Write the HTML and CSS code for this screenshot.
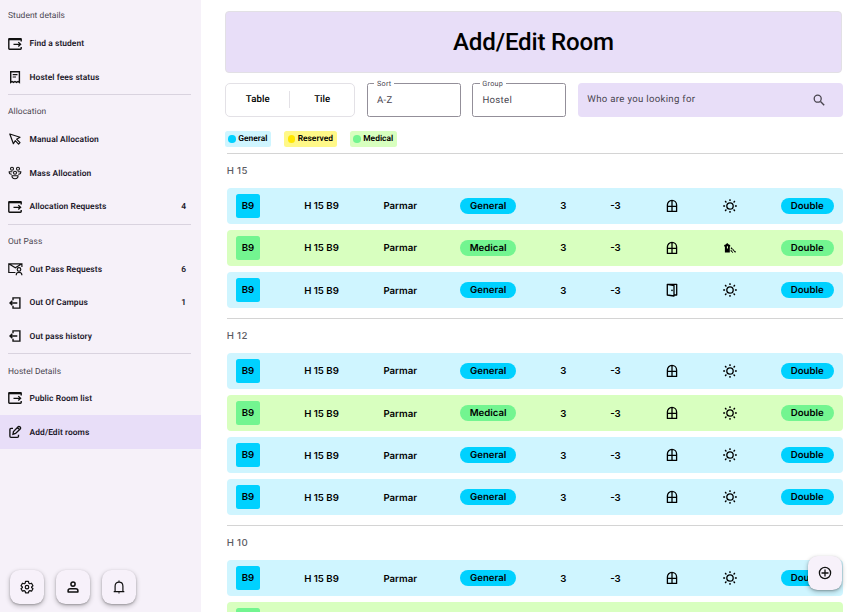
FILE: index.html
```html
<!DOCTYPE html>
<html lang="en">
<head>
<meta charset="utf-8">
<title>Add/Edit Room</title>
<link rel="stylesheet" href="styles.css">
</head>
<body>
<svg class="sprite" aria-hidden="true">
  <symbol id="window-arrow" viewBox="0 0 14 12"><path d="M13.2 3.5V1.2Q13.2.7 12.7.7H1.3Q.8.7.8 1.2V10.6Q.8 11.3 1.5 11.3H12.5Q13.2 11.3 13.2 10.6V9" fill="none" stroke="currentColor" stroke-width="1.4"/><path d="M.8.4H13.2V2.3H.8Z"/><path d="M5.5 6.3H12.6M10.3 4.1 12.6 6.3 10.3 8.5" fill="none" stroke="currentColor" stroke-width="1.3"/></symbol>
  <symbol id="receipt" viewBox="0 0 14 14"><path d="M2.7 1.7H11.4V12.4L10 11.5 8.5 12.4 7 11.5 5.5 12.4 4.1 11.5 2.7 12.4Z" fill="none" stroke="currentColor" stroke-width="1.4"/><path d="M4.7 4.7H9.5M4.7 7H8" stroke="currentColor" stroke-width="1.2"/></symbol>
  <symbol id="cursor" viewBox="0 0 14 14"><path d="M1.8 2 12 5.3 8.6 7.2 12 10.7 10.6 12.1 7.2 8.7 5.4 11.7Z" fill="none" stroke="currentColor" stroke-width="1.2" stroke-linejoin="round"/></symbol>
  <symbol id="people" viewBox="0 0 14 14"><g fill="none" stroke="currentColor" stroke-width="1.1"><circle cx="4" cy="2.8" r="1.5"/><circle cx="10" cy="2.8" r="1.5"/><circle cx="7" cy="6.7" r="1.5"/><path d="M3.8 8.2C1.8 8.3 1.1 7.2 1.2 5.8H4.4M10.2 8.2C12.2 8.3 12.9 7.2 12.8 5.8H9.6M4 9.7H10C10.2 11.7 9 12.7 7 12.7S3.8 11.7 4 9.7Z"/></g></symbol>
  <symbol id="mail-person" viewBox="0 0 15 13"><g fill="none" stroke="currentColor" stroke-width="1.2"><path d="M7.4 10H.8V1.3H13.9V4.5M.8 1.3 7.3 5.3 13.9 1.3"/><circle cx="11" cy="6.9" r="1.8"/><path d="M8.3 12.8V11.8Q8.5 9.8 11 9.8T13.8 11.8V12.8"/></g></symbol>
  <symbol id="exit" viewBox="0 0 14 14"><path d="M5 4.3V1.9H11.9V12.1H5V9.7M9.3 7H2M4.3 4.7 2 7 4.3 9.3" fill="none" stroke="currentColor" stroke-width="1.4"/></symbol>
  <symbol id="edit" viewBox="0 0 14 14"><path d="M5 3.3H3Q1.9 3.3 1.9 4.4V11.3Q1.9 12.3 3 12.3H9.4Q10.5 12.3 10.5 11.3V9.7M5 9.2 5.5 6.5 10.4 1.6Q11.1 1.1 11.8 1.8L12.3 2.3Q13 3 12.4 3.7L7.6 8.5ZM9.5 2.7 11.4 4.6" fill="none" stroke="currentColor" stroke-width="1.35"/></symbol>
  <symbol id="search" viewBox="0 0 12 12"><path d="M7.5 7.5 11.2 11.2" stroke="currentColor" stroke-width="1.4"/><circle cx="4.7" cy="4.7" r="3.5" fill="none" stroke="currentColor" stroke-width="1.3"/></symbol>
  <symbol id="window" viewBox="0 0 12 14"><path d="M1.4 12.4V6A4.6 4.6 0 0 1 10.6 6V12.4ZM6 1.4V12.4M1.4 7.3H10.6" fill="none" stroke="currentColor" stroke-width="1.3" stroke-linejoin="round"/></symbol>
  <symbol id="door" viewBox="0 0 12 14"><path d="M1.3 1.3H10.7V12H8.2M1.3 1.3 8 2.5V13L1.3 12Z" fill="none" stroke="currentColor" stroke-width="1.3" stroke-linejoin="round"/><circle cx="6" cy="7.4" r=".8"/></symbol>
  <symbol id="sun" viewBox="0 0 14 14"><circle cx="7" cy="7" r="3.2" fill="none" stroke="currentColor" stroke-width="1.3"/><path d="M7 .2V2.1M7 11.9V13.8M.2 7H2.1M11.9 7H13.8M2.1 2.1 3.4 3.4M10.6 10.6 11.9 11.9M2.1 11.9 3.4 10.6M10.6 3.4 11.9 2.1" stroke="currentColor" stroke-width="1.4"/></symbol>
  <symbol id="tower" viewBox="0 0 14 14"><path fill-rule="evenodd" d="M1.2 5.5V4L2.6 3.4 4.2 1.9 5.8 3.4 7.2 4V5.5H6.8V11.6H1.9V5.5ZM3.9 5.3V7.6H5V5.3Z"/><path d="M8 6.8 12.8 11.5M7.7 9.3 9.9 11.5" stroke="currentColor" stroke-width="1.2" stroke-dasharray="1.8 .5"/></symbol>
  <symbol id="gear" viewBox="0 0 24 24"><path d="M9.5 2.5h5l.6 3 1.8 1 2.9-1 2.4 4.3-2.3 2v1.1l2.3 2-2.4 4.3-2.9-1-1.8 1-.6 3h-5l-.6-3-1.8-1-2.9 1-2.4-4.3 2.3-2v-1.1l-2.3-2 2.4-4.3 2.9 1 1.8-1Z" fill="none" stroke="currentColor" stroke-width="2.1" stroke-linejoin="round"/><circle cx="12" cy="12.3" r="3" fill="none" stroke="currentColor" stroke-width="2.1"/></symbol>
  <symbol id="person" viewBox="0 0 14 14"><g fill="none" stroke="currentColor" stroke-width="1.5"><circle cx="7" cy="4.1" r="2.1"/><path d="M2.1 11.9V10.7Q2.1 8.7 4.2 8.7H9.8Q11.9 8.7 11.9 10.7V11.9Z" stroke-linejoin="round"/></g></symbol>
  <symbol id="bell" viewBox="0 0 14 14"><path d="M1.7 11.7H12.3M3.1 11.5V6Q3.3 2.3 7 2.2T10.9 6V11.5M7 .5V2.2" fill="none" stroke="currentColor" stroke-width="1.2"/><path d="M5.8 12.5H8.2L7 13.8Z"/></symbol>
  <symbol id="add" viewBox="0 0 14 14"><circle cx="7" cy="7" r="5.6" fill="none" stroke="currentColor" stroke-width="1.3"/><path d="M7 3.5V10.5M3.5 7H10.5" stroke="currentColor" stroke-width="1.3"/></symbol>
</svg>

<div class="app">
  <nav class="sidebar">
    <section class="nav-group">
      <h2>Student details</h2>
      <a class="nav-item"><svg class="wide"><use href="#window-arrow"/></svg><span>Find a student</span></a>
      <a class="nav-item"><svg><use href="#receipt"/></svg><span>Hostel fees status</span></a>
    </section>
    <section class="nav-group">
      <h2>Allocation</h2>
      <a class="nav-item"><svg><use href="#cursor"/></svg><span>Manual Allocation</span></a>
      <a class="nav-item"><svg><use href="#people"/></svg><span>Mass Allocation</span></a>
      <a class="nav-item"><svg class="wide"><use href="#window-arrow"/></svg><span>Allocation Requests</span><b>4</b></a>
    </section>
    <section class="nav-group">
      <h2>Out Pass</h2>
      <a class="nav-item"><svg class="mail"><use href="#mail-person"/></svg><span>Out Pass Requests</span><b>6</b></a>
      <a class="nav-item"><svg><use href="#exit"/></svg><span>Out Of Campus</span><b>1</b></a>
      <a class="nav-item"><svg><use href="#exit"/></svg><span>Out pass history</span></a>
    </section>
    <section class="nav-group">
      <h2>Hostel Details</h2>
      <a class="nav-item"><svg class="wide"><use href="#window-arrow"/></svg><span>Public Room list</span></a>
      <a class="nav-item active"><svg><use href="#edit"/></svg><span>Add/Edit rooms</span></a>
    </section>
    <div class="quick-actions">
      <button class="fab"><svg><use href="#gear"/></svg></button>
      <button class="fab"><svg><use href="#person"/></svg></button>
      <button class="fab"><svg><use href="#bell"/></svg></button>
    </div>
  </nav>

  <main class="content">
    <h1>Add/Edit Room</h1>
    <div class="toolbar">
      <div class="view-switch"><span>Table</span><span>Tile</span></div>
      <div class="field"><label>Sort</label><span>A-Z</span></div>
      <div class="field"><label>Group</label><span>Hostel</span></div>
      <div class="search"><span>Who are you looking for</span><svg><use href="#search"/></svg></div>
    </div>
    <div class="legend">
      <span class="chip general">General</span>
      <span class="chip reserved">Reserved</span>
      <span class="chip medical">Medical</span>
    </div>

    <section class="hostel">
      <h3>H 15</h3>
      <div class="row general"><b class="room">B9</b><span>H 15 B9</span><span>Parmar</span><b class="pill">General</b><span>3</span><span>-3</span><svg class="narrow"><use href="#window"/></svg><svg><use href="#sun"/></svg><b class="pill double">Double</b></div>
      <div class="row medical"><b class="room">B9</b><span>H 15 B9</span><span>Parmar</span><b class="pill">Medical</b><span>3</span><span>-3</span><svg class="narrow"><use href="#window"/></svg><svg><use href="#tower"/></svg><b class="pill double">Double</b></div>
      <div class="row general"><b class="room">B9</b><span>H 15 B9</span><span>Parmar</span><b class="pill">General</b><span>3</span><span>-3</span><svg class="narrow"><use href="#door"/></svg><svg><use href="#sun"/></svg><b class="pill double">Double</b></div>
    </section>
    <section class="hostel">
      <h3>H 12</h3>
      <div class="row general"><b class="room">B9</b><span>H 15 B9</span><span>Parmar</span><b class="pill">General</b><span>3</span><span>-3</span><svg class="narrow"><use href="#window"/></svg><svg><use href="#sun"/></svg><b class="pill double">Double</b></div>
      <div class="row medical"><b class="room">B9</b><span>H 15 B9</span><span>Parmar</span><b class="pill">Medical</b><span>3</span><span>-3</span><svg class="narrow"><use href="#window"/></svg><svg><use href="#sun"/></svg><b class="pill double">Double</b></div>
      <div class="row general"><b class="room">B9</b><span>H 15 B9</span><span>Parmar</span><b class="pill">General</b><span>3</span><span>-3</span><svg class="narrow"><use href="#window"/></svg><svg><use href="#sun"/></svg><b class="pill double">Double</b></div>
      <div class="row general"><b class="room">B9</b><span>H 15 B9</span><span>Parmar</span><b class="pill">General</b><span>3</span><span>-3</span><svg class="narrow"><use href="#window"/></svg><svg><use href="#sun"/></svg><b class="pill double">Double</b></div>
    </section>
    <section class="hostel">
      <h3>H 10</h3>
      <div class="row general"><b class="room">B9</b><span>H 15 B9</span><span>Parmar</span><b class="pill">General</b><span>3</span><span>-3</span><svg class="narrow"><use href="#window"/></svg><svg><use href="#sun"/></svg><b class="pill double">Double</b></div>
      <div class="row medical"><b class="room"></b></div>
    </section>
    <button class="fab add"><svg><use href="#add"/></svg></button>
  </main>
</div>
</body>
</html>
```
FILE: styles.css
```css
* { box-sizing: border-box; }
body { margin: 0; background: #fff; color: #000; font-family: Roboto, sans-serif; text-rendering: geometricPrecision; }
h1, h2, h3 { margin: 0; font-weight: 500; }
svg { display: block; width: 14px; height: 14px; fill: currentColor; flex: none; }
.sprite { position: absolute; width: 0; height: 0; }
.app { display: flex; height: 612px; overflow: hidden; }

.sidebar { width: 200.6px; flex: none; display: flex; flex-direction: column; background: #f6f1f9; }
.nav-group h2 {
  height: 28.3px; margin: 0 10px 0 8px; padding-top: 6.3px;
  border-top: 1px solid #d9d3df;
  font-size: 8.44px; font-weight: 450; line-height: 23px; color: #49454f; letter-spacing: .06px;
}
.nav-group:first-child h2 { height: 26.7px; border-top: 0; padding-top: 5.3px; }
.nav-item {
  display: flex; align-items: center; height: 33.75px; padding: 0 14.5px 0 8px;
  font-size: 8.44px; font-weight: 600; color: #1d192b; letter-spacing: .06px;
}
.nav-item svg { color: #111; }
.nav-item .wide { height: 12px; }
.nav-item .mail { width: 15px; margin-right: -1px; }
.nav-item span { margin-left: 7.6px; flex: 1; padding-top: 1.2px; }
.nav-item b { font-weight: 600; padding-top: 1.2px; }
.nav-item.active { background: #e8def8; }
.quick-actions { display: flex; gap: 12px; margin: auto 0 8.5px 10px; }
.fab {
  width: 34px; height: 34px; padding: 0; border: 0; border-radius: 9.6px;
  display: grid; place-items: center; color: #111; background: #f7f1fa;
  box-shadow: 0 2px 4px 1px rgba(0,0,0,.17), 0 1px 2px rgba(0,0,0,.25);
}

.content { position: relative; flex: 1; padding: 11px 18.8px 0 24.4px; }
h1 {
  width: 617px; height: 62.2px; border: 1px solid #e2e0e5; border-radius: 4px; background: #e8def8;
  font-size: 24.1px; line-height: 61px; text-align: center; letter-spacing: -.18px;
}
.toolbar { display: flex; margin-top: 9.8px; height: 34px; font-size: 9.64px; line-height: 34px; }
.view-switch {
  display: flex; align-items: center; width: 130px; margin-right: 12px;
  border: 1px solid #e3e1e6; border-radius: 5px; font-weight: 500; letter-spacing: .06px;
}
.view-switch span { flex: 1; padding-top: 1px; text-align: center; line-height: 16px; }
.view-switch span + span { border-left: 1px solid #e3e1e6; }
.field {
  position: relative; width: 94px; margin-right: 11.4px; padding-left: 9px;
  border: 1px solid #938f99; border-radius: 2.5px; line-height: 33px; color: #49454f; letter-spacing: .3px;
}
.field label {
  position: absolute; left: 6.5px; top: -5.3px; padding: 0 2.4px;
  background: #fff; font-size: 7.23px; line-height: 10px;
}
.search {
  flex: 1; display: flex; align-items: center; justify-content: space-between;
  padding: 0 18.5px 0 9.6px; border-radius: 4px; background: #e8def8; color: #49454f; letter-spacing: .3px;
}
.search svg { width: 12px; height: 12px; }
.legend { display: flex; gap: 13px; margin-top: 14px; }
.chip {
  display: flex; align-items: center; gap: 2.2px; height: 16.5px; padding: 0 4px 0 3.5px;
  border-radius: 2.5px; background: var(--tint); font-size: 8.44px; font-weight: 600; line-height: 18px;
}
.chip::before { content: ""; width: 7.6px; height: 7.6px; border-radius: 50%; background: var(--tone); }
.general { --tint: #cff5ff; --tone: #00d1ff; }
.reserved { --tint: #fff888; --tone: #ffe600; }
.medical { --tint: #d8ffbf; --tone: #73f590; }

.hostel { margin-left: 1.8px; padding-bottom: 10.05px; border-top: 1.2px solid #d4d4d4; font-family: Inter, sans-serif; }
.legend + .hostel { margin-top: 5.7px; }
.hostel h3 { height: 33.6px; font-size: 9.64px; line-height: 36px; color: #5b5b62; letter-spacing: .3px; }
.row {
  display: grid; grid-template-columns: 67.8px 79.3px 77.4px 99.3px 50px 56.4px 57px 57.6px auto;
  align-items: center; height: 36.14px; padding-left: 9.2px;
  border-radius: 4px; background: var(--tint); font-size: 9.64px; font-weight: 600;
}
.row + .row { margin-top: 6.03px; }
.room, .pill { background: var(--tone); font-weight: 600; text-align: center; }
.room { width: 24.1px; height: 24.1px; border-radius: 2.5px; line-height: 26px; }
.pill { width: 55.4px; height: 16px; border-radius: 8px; line-height: 18px; }
.row > span { padding: 2px 0 0 .4px; }
.pill.double { width: 53px; }
.row .narrow { width: 12px; }
.add { position: absolute; left: 607.4px; top: 556px; }
```
